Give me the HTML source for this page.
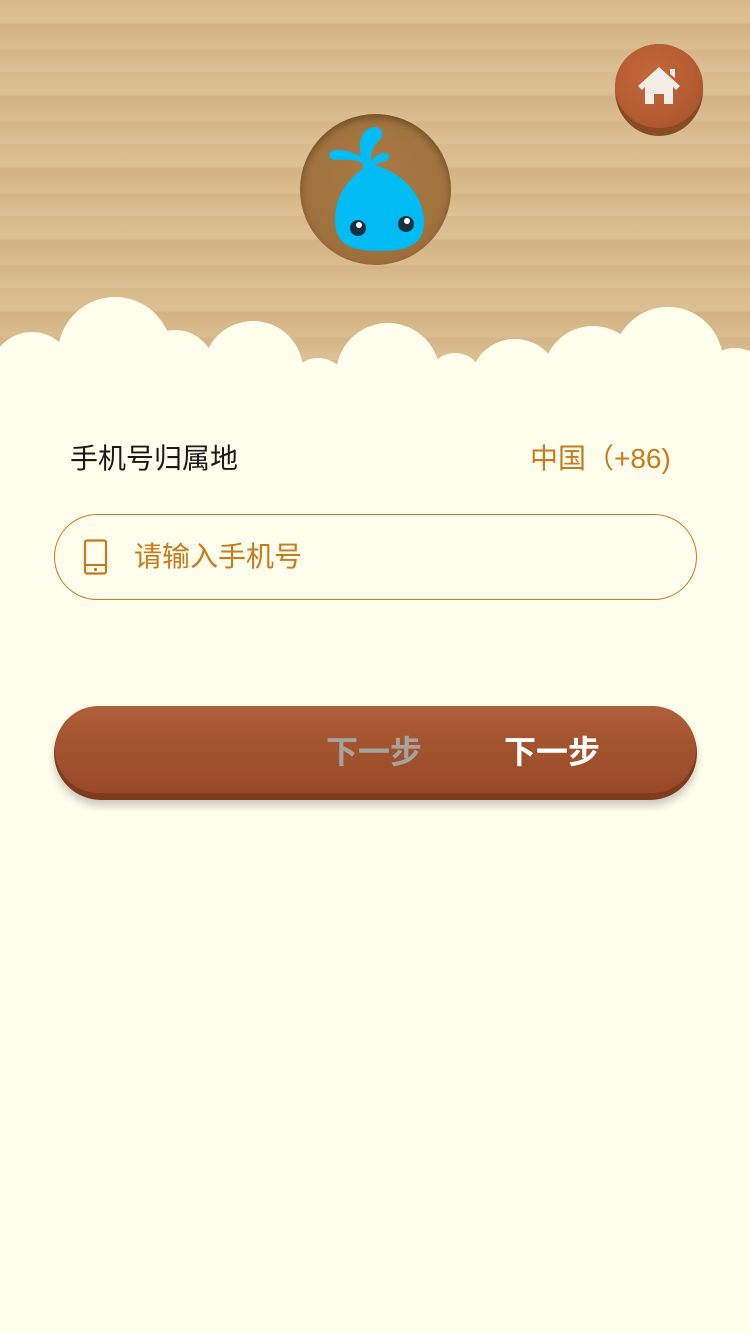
<!DOCTYPE html>
<html><head><meta charset="utf-8"><style>
body{margin:0;width:750px;height:1334px;background:#fffeed;position:relative;overflow:hidden;font-family:"Liberation Sans","Noto Sans CJK SC",sans-serif}
.wood{position:absolute;left:0;top:0;width:750px;height:400px;background:repeating-linear-gradient(180deg,#d8b98b 0,#dcc095 22px,#d2b283 25px,#dabd91 48px,#d5b587 51px,#ddc197 72px);}
.c{position:absolute;background:#fffeed;border-radius:50%}
.hole{position:absolute;left:300px;top:114px;width:151px;height:151px;border-radius:50%;background:radial-gradient(circle at 50% 40%,#a87b45,#9a6c38);box-shadow:inset 0 4px 8px rgba(0,0,0,.3)}
.home{position:absolute;left:615px;top:44px;width:88px;height:92px;border-radius:50%;background:#8a4a22}
.home div{position:absolute;left:0;top:0;width:88px;height:84px;border-radius:50%;background:radial-gradient(circle at 40% 35%,#c2673a,#a8532b)}
.lbl{position:absolute;top:440px;font-size:28px;line-height:38px}
.inp{position:absolute;left:54px;top:514px;width:641px;height:84px;border:1px solid #c87a1e;border-radius:43px;box-sizing:content-box}
.btn{position:absolute;left:54px;top:706px;width:643px;height:94px;border-radius:47px;background:#7e3c1c;box-shadow:0 6px 8px rgba(0,0,0,.2)}
.btn .t{position:absolute;left:1px;top:0;width:641px;height:87px;border-radius:46px;background:linear-gradient(180deg,#b0603a,#a3552e 40%,#99492a);}
.bt{position:absolute;top:730px;font-size:32px;font-weight:bold;line-height:44px}
</style></head><body>
<div class="wood"></div>
<div class="c" style="left:-10px;top:332px;width:84px;height:84px"></div>
<div class="c" style="left:58px;top:297px;width:114px;height:114px"></div>
<div class="c" style="left:135px;top:330px;width:80px;height:80px"></div>
<div class="c" style="left:203px;top:321px;width:100px;height:100px"></div>
<div class="c" style="left:288px;top:358px;width:60px;height:60px"></div>
<div class="c" style="left:336px;top:323px;width:104px;height:104px"></div>
<div class="c" style="left:427px;top:353px;width:56px;height:56px"></div>
<div class="c" style="left:470px;top:339px;width:90px;height:90px"></div>
<div class="c" style="left:543px;top:326px;width:100px;height:100px"></div>
<div class="c" style="left:613px;top:307px;width:110px;height:110px"></div>
<div class="c" style="left:700px;top:348px;width:70px;height:70px"></div>
<div style="position:absolute;left:0;top:375px;width:750px;height:50px;background:#fffeed"></div>
<div class="hole"></div>
<svg style="position:absolute;left:300px;top:114px" width="151" height="151" viewBox="0 0 151 151">
<g fill="#00bbf4">
<path d="M70 50 C100 56 124 80 124 108 C124 130 108 137 80 137 C50 137 35 130 35 106 C35 80 50 62 70 50 Z"/>
<path d="M64 56 C60 42 58 30 62 22 C66 12 80 10 82 18 C84 26 74 28 72 38 C70 46 72 52 72 56 Z"/>
<path d="M66 52 C60 46 50 45 36 46 C28 46 27 37 35 36 C46 35 60 40 68 48 Z"/>
<path d="M70 50 C74 42 80 38 86 39 C92 41 90 47 82 48 C78 49 74 51 72 54 Z"/>
</g>
<circle cx="58" cy="114" r="8" fill="#17313f"/><circle cx="59" cy="111" r="3" fill="#fff"/>
<circle cx="106" cy="110" r="8" fill="#17313f"/><circle cx="107" cy="107" r="3" fill="#fff"/>
</svg>
<div class="home"><div></div></div>
<svg style="position:absolute;left:636px;top:64px" width="46" height="42" viewBox="0 0 46 42">
<path d="M23 3 L44 22 L40 26 L37 23 L37 40 L28 40 L28 30 L18 30 L18 40 L9 40 L9 23 L6 26 L2 22 Z M34 5 L39 5 L39 14 L34 10Z" fill="#f3ede7"/>
</svg>
<div class="lbl" style="left:70px;color:#1a1a1a">手机号归属地</div>
<div class="lbl" style="left:530px;color:#c87a1e">中国（+86)</div>
<div class="inp"></div>
<svg style="position:absolute;left:83px;top:539px" width="26" height="36" viewBox="0 0 26 36"><rect x="2" y="1.5" width="21" height="33" rx="2" fill="none" stroke="#c87a1e" stroke-width="2.2"/><line x1="2" y1="26" x2="23" y2="26" stroke="#c87a1e" stroke-width="2"/><circle cx="12.5" cy="30.5" r="1.6" fill="#c87a1e"/></svg>
<div class="lbl" style="left:134px;top:538px;color:#c87a1e">请输入手机号</div>
<div class="btn"><div class="t"></div></div>
<div class="bt" style="left:326px;color:#a8a29c">下一步</div>
<div class="bt" style="left:504px;color:#fff">下一步</div>
</body></html>
